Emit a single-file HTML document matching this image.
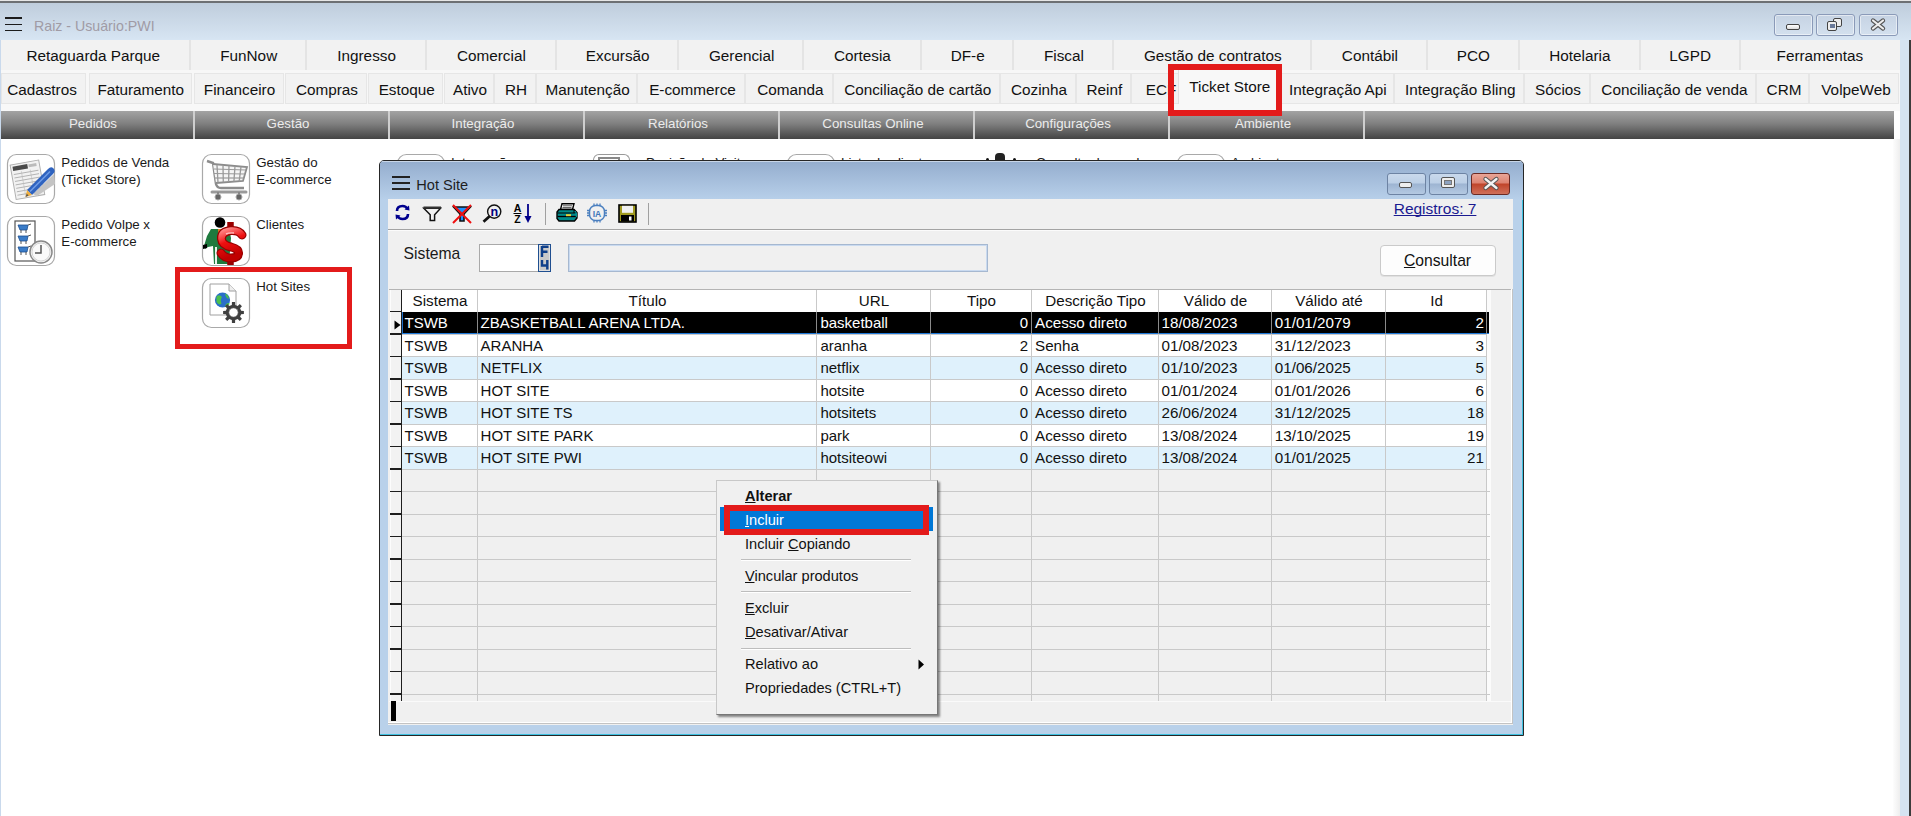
<!DOCTYPE html><html><head><meta charset="utf-8"><title>Hot Site</title><style>
html,body{margin:0;padding:0;}body{width:1911px;height:816px;overflow:hidden;position:relative;background:#fff;font-family:"Liberation Sans",sans-serif;}
div{box-sizing:border-box;}
u{text-decoration:underline;text-underline-offset:1px;text-decoration-skip-ink:none;}
</style></head><body>
<div style="position:absolute;left:0px;top:0px;width:1911px;height:1px;background:#e6e6e6"></div>
<div style="position:absolute;left:0px;top:1px;width:1911px;height:2px;background:#6d7073"></div>
<div style="position:absolute;left:0px;top:3px;width:1911px;height:37px;background:linear-gradient(#bfcddc,#d7e5f3)"></div>
<div style="position:absolute;left:0px;top:40px;width:1px;height:776px;background:#c9d9ec"></div>
<div style="position:absolute;left:1900px;top:40px;width:9px;height:776px;background:#d5e3f1"></div>
<div style="position:absolute;left:1909px;top:40px;width:2px;height:776px;background:#3c3c3c"></div>
<div style="position:absolute;left:5px;top:17.3px;width:17px;height:1.7px;background:#1c1c1c"></div>
<div style="position:absolute;left:5px;top:23.6px;width:17px;height:1.7px;background:#1c1c1c"></div>
<div style="position:absolute;left:5px;top:29.6px;width:17px;height:1.7px;background:#1c1c1c"></div>
<div style="position:absolute;left:34.00px;top:11.08px;width:1000px;height:30px;line-height:30px;font-size:14.2px;color:#a09ba5;text-align:left;font-weight:normal;white-space:nowrap;">Raiz - Usuário:PWI</div>
<div style="position:absolute;left:1774px;top:14px;width:39px;height:22px;border:1px solid #8a9ab8;border-radius:3px;background:linear-gradient(#c6d3e3,#d3e0ee);box-shadow:inset 0 0 0 1px rgba(255,255,255,.5)"></div>
<div style="position:absolute;left:1786px;top:24px;width:14px;height:6px;background:linear-gradient(#fff,#ddd);border:1px solid #444;border-radius:2px"></div>
<div style="position:absolute;left:1816px;top:14px;width:39px;height:22px;border:1px solid #8a9ab8;border-radius:3px;background:linear-gradient(#c6d3e3,#d3e0ee);box-shadow:inset 0 0 0 1px rgba(255,255,255,.5)"></div>
<div style="position:absolute;left:1832.5px;top:18px;width:9.5px;height:9px;background:#eee;border:1px solid #444;border-radius:2px"></div>
<div style="position:absolute;left:1827px;top:21px;width:10px;height:10px;background:#eee;border:1px solid #444;border-radius:2px"></div>
<div style="position:absolute;left:1829.5px;top:24px;width:5px;height:4px;background:#6a7a99"></div>
<div style="position:absolute;left:1859px;top:14px;width:39px;height:22px;border:1px solid #8a9ab8;border-radius:3px;background:linear-gradient(#c6d3e3,#d3e0ee);box-shadow:inset 0 0 0 1px rgba(255,255,255,.5)"></div>
<svg style="position:absolute;left:1868px;top:16px" width="20" height="17" viewBox="0 0 20 17"><path d="M5 4.5 L15 12.5 M15 4.5 L5 12.5" stroke="#555" stroke-width="4.4" stroke-linecap="round"/><path d="M5 4.5 L15 12.5 M15 4.5 L5 12.5" stroke="#eee" stroke-width="2.2" stroke-linecap="round"/></svg>
<div style="position:absolute;left:1px;top:40px;width:1899px;height:30px;background:#f2f2f2"></div>
<div style="position:absolute;left:189px;top:40px;width:2px;height:30px;background:#e4e4e4"></div>
<div style="position:absolute;left:305px;top:40px;width:2px;height:30px;background:#e4e4e4"></div>
<div style="position:absolute;left:425px;top:40px;width:2px;height:30px;background:#e4e4e4"></div>
<div style="position:absolute;left:555px;top:40px;width:2px;height:30px;background:#e4e4e4"></div>
<div style="position:absolute;left:677px;top:40px;width:2px;height:30px;background:#e4e4e4"></div>
<div style="position:absolute;left:802px;top:40px;width:2px;height:30px;background:#e4e4e4"></div>
<div style="position:absolute;left:920px;top:40px;width:2px;height:30px;background:#e4e4e4"></div>
<div style="position:absolute;left:1012px;top:40px;width:2px;height:30px;background:#e4e4e4"></div>
<div style="position:absolute;left:1112px;top:40px;width:2px;height:30px;background:#e4e4e4"></div>
<div style="position:absolute;left:1310px;top:40px;width:2px;height:30px;background:#e4e4e4"></div>
<div style="position:absolute;left:1426px;top:40px;width:2px;height:30px;background:#e4e4e4"></div>
<div style="position:absolute;left:1518px;top:40px;width:2px;height:30px;background:#e4e4e4"></div>
<div style="position:absolute;left:1639px;top:40px;width:2px;height:30px;background:#e4e4e4"></div>
<div style="position:absolute;left:1739px;top:40px;width:2px;height:30px;background:#e4e4e4"></div>
<div style="position:absolute;left:1px;top:70px;width:1899px;height:3px;background:#f7f7f7"></div>
<div style="position:absolute;left:-406.70px;top:40.70px;width:1000px;height:30px;line-height:30px;font-size:15.3px;color:#111;text-align:center;font-weight:normal;white-space:nowrap;">Retaguarda Parque</div>
<div style="position:absolute;left:-251.30px;top:40.70px;width:1000px;height:30px;line-height:30px;font-size:15.3px;color:#111;text-align:center;font-weight:normal;white-space:nowrap;">FunNow</div>
<div style="position:absolute;left:-133.40px;top:40.70px;width:1000px;height:30px;line-height:30px;font-size:15.3px;color:#111;text-align:center;font-weight:normal;white-space:nowrap;">Ingresso</div>
<div style="position:absolute;left:-8.60px;top:40.70px;width:1000px;height:30px;line-height:30px;font-size:15.3px;color:#111;text-align:center;font-weight:normal;white-space:nowrap;">Comercial</div>
<div style="position:absolute;left:117.70px;top:40.70px;width:1000px;height:30px;line-height:30px;font-size:15.3px;color:#111;text-align:center;font-weight:normal;white-space:nowrap;">Excursão</div>
<div style="position:absolute;left:241.70px;top:40.70px;width:1000px;height:30px;line-height:30px;font-size:15.3px;color:#111;text-align:center;font-weight:normal;white-space:nowrap;">Gerencial</div>
<div style="position:absolute;left:362.40px;top:40.70px;width:1000px;height:30px;line-height:30px;font-size:15.3px;color:#111;text-align:center;font-weight:normal;white-space:nowrap;">Cortesia</div>
<div style="position:absolute;left:467.70px;top:40.70px;width:1000px;height:30px;line-height:30px;font-size:15.3px;color:#111;text-align:center;font-weight:normal;white-space:nowrap;">DF-e</div>
<div style="position:absolute;left:563.90px;top:40.70px;width:1000px;height:30px;line-height:30px;font-size:15.3px;color:#111;text-align:center;font-weight:normal;white-space:nowrap;">Fiscal</div>
<div style="position:absolute;left:712.80px;top:40.70px;width:1000px;height:30px;line-height:30px;font-size:15.3px;color:#111;text-align:center;font-weight:normal;white-space:nowrap;">Gestão de contratos</div>
<div style="position:absolute;left:869.90px;top:40.70px;width:1000px;height:30px;line-height:30px;font-size:15.3px;color:#111;text-align:center;font-weight:normal;white-space:nowrap;">Contábil</div>
<div style="position:absolute;left:973.30px;top:40.70px;width:1000px;height:30px;line-height:30px;font-size:15.3px;color:#111;text-align:center;font-weight:normal;white-space:nowrap;">PCO</div>
<div style="position:absolute;left:1079.80px;top:40.70px;width:1000px;height:30px;line-height:30px;font-size:15.3px;color:#111;text-align:center;font-weight:normal;white-space:nowrap;">Hotelaria</div>
<div style="position:absolute;left:1190.20px;top:40.70px;width:1000px;height:30px;line-height:30px;font-size:15.3px;color:#111;text-align:center;font-weight:normal;white-space:nowrap;">LGPD</div>
<div style="position:absolute;left:1319.90px;top:40.70px;width:1000px;height:30px;line-height:30px;font-size:15.3px;color:#111;text-align:center;font-weight:normal;white-space:nowrap;">Ferramentas</div>
<div style="position:absolute;left:1px;top:73px;width:1899px;height:31px;background:#f7f7f7"></div>
<div style="position:absolute;left:1px;top:73px;width:85px;height:31px;background:#f2f2f2;border:1px solid #e6e6e6"></div>
<div style="position:absolute;left:89px;top:73px;width:103px;height:31px;background:#f2f2f2;border:1px solid #e6e6e6"></div>
<div style="position:absolute;left:194px;top:73px;width:90px;height:31px;background:#f2f2f2;border:1px solid #e6e6e6"></div>
<div style="position:absolute;left:285px;top:73px;width:82px;height:31px;background:#f2f2f2;border:1px solid #e6e6e6"></div>
<div style="position:absolute;left:368px;top:73px;width:75px;height:31px;background:#f2f2f2;border:1px solid #e6e6e6"></div>
<div style="position:absolute;left:444px;top:73px;width:50px;height:31px;background:#f2f2f2;border:1px solid #e6e6e6"></div>
<div style="position:absolute;left:494px;top:73px;width:42px;height:31px;background:#f2f2f2;border:1px solid #e6e6e6"></div>
<div style="position:absolute;left:536px;top:73px;width:101px;height:31px;background:#f2f2f2;border:1px solid #e6e6e6"></div>
<div style="position:absolute;left:637px;top:73px;width:108px;height:31px;background:#f2f2f2;border:1px solid #e6e6e6"></div>
<div style="position:absolute;left:745px;top:73px;width:88px;height:31px;background:#f2f2f2;border:1px solid #e6e6e6"></div>
<div style="position:absolute;left:833px;top:73px;width:167px;height:31px;background:#f2f2f2;border:1px solid #e6e6e6"></div>
<div style="position:absolute;left:1000px;top:73px;width:76px;height:31px;background:#f2f2f2;border:1px solid #e6e6e6"></div>
<div style="position:absolute;left:1076px;top:73px;width:55px;height:31px;background:#f2f2f2;border:1px solid #e6e6e6"></div>
<div style="position:absolute;left:1131px;top:73px;width:48px;height:31px;background:#f2f2f2;border:1px solid #e6e6e6"></div>
<div style="position:absolute;left:1179px;top:73px;width:97px;height:31px;background:#f2f2f2;border:1px solid #e6e6e6"></div>
<div style="position:absolute;left:1276px;top:73px;width:118px;height:31px;background:#f2f2f2;border:1px solid #e6e6e6"></div>
<div style="position:absolute;left:1394px;top:73px;width:130px;height:31px;background:#f2f2f2;border:1px solid #e6e6e6"></div>
<div style="position:absolute;left:1524px;top:73px;width:66px;height:31px;background:#f2f2f2;border:1px solid #e6e6e6"></div>
<div style="position:absolute;left:1590px;top:73px;width:166px;height:31px;background:#f2f2f2;border:1px solid #e6e6e6"></div>
<div style="position:absolute;left:1756px;top:73px;width:53px;height:31px;background:#f2f2f2;border:1px solid #e6e6e6"></div>
<div style="position:absolute;left:1809px;top:73px;width:90px;height:31px;background:#f2f2f2;border:1px solid #e6e6e6"></div>
<div style="position:absolute;left:-458.00px;top:74.70px;width:1000px;height:30px;line-height:30px;font-size:15.3px;color:#111;text-align:center;font-weight:normal;white-space:nowrap;">Cadastros</div>
<div style="position:absolute;left:-359.25px;top:74.70px;width:1000px;height:30px;line-height:30px;font-size:15.3px;color:#111;text-align:center;font-weight:normal;white-space:nowrap;">Faturamento</div>
<div style="position:absolute;left:-260.50px;top:74.70px;width:1000px;height:30px;line-height:30px;font-size:15.3px;color:#111;text-align:center;font-weight:normal;white-space:nowrap;">Financeiro</div>
<div style="position:absolute;left:-173.00px;top:74.70px;width:1000px;height:30px;line-height:30px;font-size:15.3px;color:#111;text-align:center;font-weight:normal;white-space:nowrap;">Compras</div>
<div style="position:absolute;left:-93.30px;top:74.70px;width:1000px;height:30px;line-height:30px;font-size:15.3px;color:#111;text-align:center;font-weight:normal;white-space:nowrap;">Estoque</div>
<div style="position:absolute;left:-30.00px;top:74.70px;width:1000px;height:30px;line-height:30px;font-size:15.3px;color:#111;text-align:center;font-weight:normal;white-space:nowrap;">Ativo</div>
<div style="position:absolute;left:16.00px;top:74.70px;width:1000px;height:30px;line-height:30px;font-size:15.3px;color:#111;text-align:center;font-weight:normal;white-space:nowrap;">RH</div>
<div style="position:absolute;left:87.60px;top:74.70px;width:1000px;height:30px;line-height:30px;font-size:15.3px;color:#111;text-align:center;font-weight:normal;white-space:nowrap;">Manutenção</div>
<div style="position:absolute;left:192.50px;top:74.70px;width:1000px;height:30px;line-height:30px;font-size:15.3px;color:#111;text-align:center;font-weight:normal;white-space:nowrap;">E-commerce</div>
<div style="position:absolute;left:290.40px;top:74.70px;width:1000px;height:30px;line-height:30px;font-size:15.3px;color:#111;text-align:center;font-weight:normal;white-space:nowrap;">Comanda</div>
<div style="position:absolute;left:417.70px;top:74.70px;width:1000px;height:30px;line-height:30px;font-size:15.3px;color:#111;text-align:center;font-weight:normal;white-space:nowrap;">Conciliação de cartão</div>
<div style="position:absolute;left:539.00px;top:74.70px;width:1000px;height:30px;line-height:30px;font-size:15.3px;color:#111;text-align:center;font-weight:normal;white-space:nowrap;">Cozinha</div>
<div style="position:absolute;left:604.40px;top:74.70px;width:1000px;height:30px;line-height:30px;font-size:15.3px;color:#111;text-align:center;font-weight:normal;white-space:nowrap;">Reinf</div>
<div style="position:absolute;left:661.00px;top:74.70px;width:1000px;height:30px;line-height:30px;font-size:15.3px;color:#111;text-align:center;font-weight:normal;white-space:nowrap;">ECF</div>
<div style="position:absolute;left:837.80px;top:74.70px;width:1000px;height:30px;line-height:30px;font-size:15.3px;color:#111;text-align:center;font-weight:normal;white-space:nowrap;">Integração Api</div>
<div style="position:absolute;left:960.20px;top:74.70px;width:1000px;height:30px;line-height:30px;font-size:15.3px;color:#111;text-align:center;font-weight:normal;white-space:nowrap;">Integração Bling</div>
<div style="position:absolute;left:1058.00px;top:74.70px;width:1000px;height:30px;line-height:30px;font-size:15.3px;color:#111;text-align:center;font-weight:normal;white-space:nowrap;">Sócios</div>
<div style="position:absolute;left:1174.50px;top:74.70px;width:1000px;height:30px;line-height:30px;font-size:15.3px;color:#111;text-align:center;font-weight:normal;white-space:nowrap;">Conciliação de venda</div>
<div style="position:absolute;left:1284.00px;top:74.70px;width:1000px;height:30px;line-height:30px;font-size:15.3px;color:#111;text-align:center;font-weight:normal;white-space:nowrap;">CRM</div>
<div style="position:absolute;left:1356.00px;top:74.70px;width:1000px;height:30px;line-height:30px;font-size:15.3px;color:#111;text-align:center;font-weight:normal;white-space:nowrap;">VolpeWeb</div>
<div style="position:absolute;left:1178px;top:70px;width:100px;height:39px;background:#f8f8f8;border-left:1px solid #e0e0e0"></div>
<div style="position:absolute;left:729.80px;top:71.70px;width:1000px;height:30px;line-height:30px;font-size:15.3px;color:#111;text-align:center;font-weight:normal;white-space:nowrap;">Ticket Store</div>
<div style="position:absolute;left:104px;top:104px;width:0px;height:0px;"></div>
<div style="position:absolute;left:1px;top:104px;width:1899px;height:7px;background:#f8f8f8"></div>
<div style="position:absolute;left:1px;top:111px;width:1893px;height:28px;background:linear-gradient(#a3a3a3,#808080 45%,#444)"></div>
<div style="position:absolute;left:193px;top:111px;width:2px;height:28px;background:#cfcfcf"></div>
<div style="position:absolute;left:388px;top:111px;width:2px;height:28px;background:#cfcfcf"></div>
<div style="position:absolute;left:583px;top:111px;width:2px;height:28px;background:#cfcfcf"></div>
<div style="position:absolute;left:778px;top:111px;width:2px;height:28px;background:#cfcfcf"></div>
<div style="position:absolute;left:973px;top:111px;width:2px;height:28px;background:#cfcfcf"></div>
<div style="position:absolute;left:1168px;top:111px;width:2px;height:28px;background:#cfcfcf"></div>
<div style="position:absolute;left:1363px;top:111px;width:2px;height:28px;background:#cfcfcf"></div>
<div style="position:absolute;left:-407.00px;top:109.09px;width:1000px;height:30px;line-height:30px;font-size:13.3px;color:#ececec;text-align:center;font-weight:normal;white-space:nowrap;">Pedidos</div>
<div style="position:absolute;left:-212.00px;top:109.09px;width:1000px;height:30px;line-height:30px;font-size:13.3px;color:#ececec;text-align:center;font-weight:normal;white-space:nowrap;">Gestão</div>
<div style="position:absolute;left:-17.00px;top:109.09px;width:1000px;height:30px;line-height:30px;font-size:13.3px;color:#ececec;text-align:center;font-weight:normal;white-space:nowrap;">Integração</div>
<div style="position:absolute;left:178.00px;top:109.09px;width:1000px;height:30px;line-height:30px;font-size:13.3px;color:#ececec;text-align:center;font-weight:normal;white-space:nowrap;">Relatórios</div>
<div style="position:absolute;left:373.00px;top:109.09px;width:1000px;height:30px;line-height:30px;font-size:13.3px;color:#ececec;text-align:center;font-weight:normal;white-space:nowrap;">Consultas Online</div>
<div style="position:absolute;left:568.00px;top:109.09px;width:1000px;height:30px;line-height:30px;font-size:13.3px;color:#ececec;text-align:center;font-weight:normal;white-space:nowrap;">Configurações</div>
<div style="position:absolute;left:763.00px;top:109.09px;width:1000px;height:30px;line-height:30px;font-size:13.3px;color:#ececec;text-align:center;font-weight:normal;white-space:nowrap;">Ambiente</div>
<div style="position:absolute;left:1893px;top:139px;width:7px;height:677px;background:linear-gradient(90deg,#fdfdfd,#eeeeee)"></div>
<svg style="position:absolute;left:6px;top:153px" width="51" height="53" viewBox="-1 -1 51 53"><rect x="0.5" y="0.5" width="47" height="49" rx="9" ry="9" fill="#fff" stroke="#a9a9a9" stroke-width="1.2"/><g transform="rotate(-10 22 26)"><rect x="6" y="8" width="29" height="35" fill="#f2f2f2" stroke="#b0b0b0" stroke-width="1"/><rect x="8" y="10" width="15" height="4.5" fill="#4a4a4a"/><rect x="24" y="10.5" width="8" height="3" fill="#bbb"/><line x1="8" y1="18.0" x2="33" y2="18.0" stroke="#a8a8a8" stroke-width="0.8"/><line x1="8" y1="21.5" x2="33" y2="21.5" stroke="#a8a8a8" stroke-width="0.8"/><line x1="8" y1="25.0" x2="33" y2="25.0" stroke="#a8a8a8" stroke-width="0.8"/><line x1="8" y1="28.5" x2="33" y2="28.5" stroke="#a8a8a8" stroke-width="0.8"/><line x1="8" y1="32.0" x2="33" y2="32.0" stroke="#a8a8a8" stroke-width="0.8"/><line x1="8" y1="35.5" x2="33" y2="35.5" stroke="#a8a8a8" stroke-width="0.8"/><line x1="8" y1="39.0" x2="33" y2="39.0" stroke="#a8a8a8" stroke-width="0.8"/><line x1="16" y1="16" x2="16" y2="41" stroke="#bbb" stroke-width="0.6"/><line x1="25" y1="16" x2="25" y2="41" stroke="#bbb" stroke-width="0.6"/></g><path d="M47 20 L48 30 L30 42 L26 40 Z" fill="#c4c4c4"/><path d="M20 36 L41 15 Q44 12 46.5 14.5 Q49 17 46 20 L25 41 Z" fill="#2f63bf"/><path d="M23 37.5 L43 17.5" stroke="#6f9ce6" stroke-width="1.6"/><path d="M20 36 L25 41 L18.5 43 Z" fill="#f0b040"/><path d="M18.5 43 L19.8 39.8 L21.6 41.6 Z" fill="#555"/></svg>
<div style="position:absolute;left:61.30px;top:147.89px;width:1000px;height:30px;line-height:30px;font-size:13.3px;color:#1a1a1a;text-align:left;font-weight:normal;white-space:nowrap;">Pedidos de Venda</div>
<div style="position:absolute;left:61.30px;top:165.49px;width:1000px;height:30px;line-height:30px;font-size:13.3px;color:#1a1a1a;text-align:left;font-weight:normal;white-space:nowrap;">(Ticket Store)</div>
<svg style="position:absolute;left:6px;top:215px" width="51" height="53" viewBox="-1 -1 51 53"><rect x="0.5" y="0.5" width="47" height="49" rx="9" ry="9" fill="#fff" stroke="#a9a9a9" stroke-width="1.2"/><rect x="8" y="5" width="20" height="40" fill="#fff" stroke="#555" stroke-width="1.2"/><g transform="translate(11 8)"><path d="M0 1 L10 1 L9 6 L2 6 Z" fill="#3a7cc8" stroke="#1d4f90" stroke-width="0.8"/><line x1="3" y1="6" x2="3" y2="9" stroke="#555"/><line x1="8" y1="6" x2="8" y2="9" stroke="#555"/><path d="M10 1 L13 0" stroke="#555"/></g><g transform="translate(11 19)"><path d="M0 1 L10 1 L9 6 L2 6 Z" fill="#3a7cc8" stroke="#1d4f90" stroke-width="0.8"/><line x1="3" y1="6" x2="3" y2="9" stroke="#555"/><line x1="8" y1="6" x2="8" y2="9" stroke="#555"/><path d="M10 1 L13 0" stroke="#555"/></g><g transform="translate(11 30)"><path d="M0 1 L10 1 L9 6 L2 6 Z" fill="#3a7cc8" stroke="#1d4f90" stroke-width="0.8"/><line x1="3" y1="6" x2="3" y2="9" stroke="#555"/><line x1="8" y1="6" x2="8" y2="9" stroke="#555"/><path d="M10 1 L13 0" stroke="#555"/></g><circle cx="34" cy="36" r="11" fill="#f2f2f2" stroke="#888" stroke-width="1.5"/><circle cx="34" cy="36" r="9" fill="#fafafa" stroke="#ccc" stroke-width="0.8"/><path d="M34 29 L34 37 L28 37" stroke="#555" stroke-width="1.5" fill="none"/></svg>
<div style="position:absolute;left:61.30px;top:209.89px;width:1000px;height:30px;line-height:30px;font-size:13.3px;color:#1a1a1a;text-align:left;font-weight:normal;white-space:nowrap;">Pedido Volpe x</div>
<div style="position:absolute;left:61.30px;top:227.49px;width:1000px;height:30px;line-height:30px;font-size:13.3px;color:#1a1a1a;text-align:left;font-weight:normal;white-space:nowrap;">E-commerce</div>
<svg style="position:absolute;left:201px;top:153px" width="51" height="53" viewBox="-1 -1 51 53"><rect x="0.5" y="0.5" width="47" height="49" rx="9" ry="9" fill="#fff" stroke="#a9a9a9" stroke-width="1.2"/><path d="M5 7 L11 9 L14 30 Q15 34 19 34 L42 34" stroke="#8c8c8c" stroke-width="2.4" fill="none"/><path d="M11 10 L45 13 L41 27 L14 29" stroke="#8c8c8c" stroke-width="1.8" fill="#f5f5f5"/><line x1="15" y1="11.0" x2="16.0" y2="28.5" stroke="#999" stroke-width="1.3"/><line x1="21" y1="11.4" x2="21.3" y2="28.2" stroke="#999" stroke-width="1.3"/><line x1="27" y1="11.8" x2="26.6" y2="27.9" stroke="#999" stroke-width="1.3"/><line x1="33" y1="12.2" x2="31.9" y2="27.6" stroke="#999" stroke-width="1.3"/><line x1="39" y1="12.6" x2="37.2" y2="27.3" stroke="#999" stroke-width="1.3"/><line x1="12" y1="15.0" x2="44.0" y2="16" stroke="#999" stroke-width="1.2"/><line x1="12" y1="19.5" x2="42.8" y2="20" stroke="#999" stroke-width="1.2"/><line x1="12" y1="24.0" x2="41.6" y2="24" stroke="#999" stroke-width="1.2"/><path d="M10 38 L44 38" stroke="#9a9a9a" stroke-width="3" stroke-linecap="round"/><circle cx="16" cy="43" r="3" fill="#666" stroke="#aaa"/><circle cx="37" cy="43" r="3" fill="#666" stroke="#aaa"/><line x1="16" y1="38" x2="16" y2="41" stroke="#888" stroke-width="2"/><line x1="37" y1="38" x2="37" y2="41" stroke="#888" stroke-width="2"/></svg>
<div style="position:absolute;left:256.20px;top:147.89px;width:1000px;height:30px;line-height:30px;font-size:13.3px;color:#1a1a1a;text-align:left;font-weight:normal;white-space:nowrap;">Gestão do</div>
<div style="position:absolute;left:256.20px;top:165.49px;width:1000px;height:30px;line-height:30px;font-size:13.3px;color:#1a1a1a;text-align:left;font-weight:normal;white-space:nowrap;">E-commerce</div>
<svg style="position:absolute;left:201px;top:215px" width="51" height="53" viewBox="-1 -1 51 53"><rect x="0.5" y="0.5" width="47" height="49" rx="9" ry="9" fill="#fff" stroke="#a9a9a9" stroke-width="1.2"/><defs><linearGradient id="rg" x1="0" y1="0" x2="0.3" y2="1"><stop offset="0" stop-color="#ff8a8a"/><stop offset="0.45" stop-color="#ee1010"/><stop offset="1" stop-color="#c00000"/></linearGradient></defs><circle cx="18" cy="6.5" r="5.3" fill="#000"/><path d="M9 13 L27 13 L29 22 L27 48 L12 48 L11 30 L6 31 L3 33 L2 30 L5 20 Z" fill="#1f7a3e"/><path d="M13 31 L13 48 L15 48 L15 31 Z" fill="#fff" opacity="0.9"/><path d="M16 13 L20 13 L19 29 L17 29 Z" fill="#f07a20"/><path d="M1 29 L5 28 L5 32 L1 33 Z" fill="#000"/><path d="M28.5 6 L28.5 17 M28.5 39 L28.5 49" stroke="#9a0000" stroke-width="6.5"/><path d="M28.5 7 L28.5 17 M28.5 39 L28.5 48.5" stroke="url(#rg)" stroke-width="4.2"/><path d="M40 19 Q37 14 29 14.5 Q19 15.5 19.5 23 Q20 29 29 31 Q37 33 36.5 37.5 Q36 42 29 42 Q22 42 19 37" stroke="#9a0000" stroke-width="9" fill="none" stroke-linecap="round"/><path d="M40 19 Q37 14 29 14.5 Q19 15.5 19.5 23 Q20 29 29 31 Q37 33 36.5 37.5 Q36 42 29 42 Q22 42 19 37" stroke="url(#rg)" stroke-width="6.5" fill="none" stroke-linecap="round"/><path d="M24 18 Q27 16.5 32 17" stroke="#ffc0c0" stroke-width="1.5" fill="none"/></svg>
<div style="position:absolute;left:256.20px;top:209.89px;width:1000px;height:30px;line-height:30px;font-size:13.3px;color:#1a1a1a;text-align:left;font-weight:normal;white-space:nowrap;">Clientes</div>
<svg style="position:absolute;left:201px;top:277px" width="51" height="53" viewBox="-1 -1 51 53"><rect x="0.5" y="0.5" width="47" height="49" rx="9" ry="9" fill="#fff" stroke="#a9a9a9" stroke-width="1.2"/><path d="M8 6 L27 6 L34 13 L34 37 L8 37 Z" fill="#fff" stroke="#a0a0a0" stroke-width="1"/><path d="M27 6 L27 13 L34 13" fill="#eee" stroke="#a0a0a0" stroke-width="1"/><circle cx="20.5" cy="22" r="7.6" fill="#2a6fc9"/><path d="M14.5 18.5 Q17.5 16 20 19 Q18 22 19.5 25.5 Q17 28 14.5 24 Z" fill="#4cc04c"/><path d="M23 15.5 Q27.5 17.5 26.5 21 Q24 20 23 15.5 Z" fill="#4cc04c"/><path d="M24 26 Q27 24 27.5 26 Q26 29 23 28.5 Z" fill="#4cc04c"/><path d="M39.12 32.83 L41.88 32.94 L41.88 36.06 L39.12 36.17 L38.07 38.71 L39.95 40.74 L37.74 42.95 L35.71 41.07 L33.17 42.12 L33.06 44.88 L29.94 44.88 L29.83 42.12 L27.29 41.07 L25.26 42.95 L23.05 40.74 L24.93 38.71 L23.88 36.17 L21.12 36.06 L21.12 32.94 L23.88 32.83 L24.93 30.29 L23.05 28.26 L25.26 26.05 L27.29 27.93 L29.83 26.88 L29.94 24.12 L33.06 24.12 L33.17 26.88 L35.71 27.93 L37.74 26.05 L39.95 28.26 L38.07 30.29 Z" fill="#3f3f3f"/><circle cx="31.5" cy="34.5" r="4.6" fill="#fff"/><circle cx="31.5" cy="34.5" r="4.6" fill="none" stroke="#666" stroke-width="0.6"/></svg>
<div style="position:absolute;left:256.20px;top:271.89px;width:1000px;height:30px;line-height:30px;font-size:13.3px;color:#1a1a1a;text-align:left;font-weight:normal;white-space:nowrap;">Hot Sites</div>
<svg style="position:absolute;left:396px;top:153px" width="51" height="53" viewBox="-1 -1 51 53"><rect x="0.5" y="0.5" width="47" height="49" rx="9" ry="9" fill="#fff" stroke="#a9a9a9" stroke-width="1.2"/></svg>
<div style="position:absolute;left:451.00px;top:147.89px;width:1000px;height:30px;line-height:30px;font-size:13.3px;color:#1a1a1a;text-align:left;font-weight:normal;white-space:nowrap;">Integração</div>
<div style="position:absolute;left:593px;top:154px;width:37px;height:8px;border:1px solid #999;border-bottom:none;border-radius:6px 6px 0 0"></div>
<div style="position:absolute;left:598px;top:157px;width:22px;height:5px;border:2px solid #888;border-bottom:none"></div>
<div style="position:absolute;left:646.00px;top:147.89px;width:1000px;height:30px;line-height:30px;font-size:13.3px;color:#1a1a1a;text-align:left;font-weight:normal;white-space:nowrap;">Posição de Visitas</div>
<svg style="position:absolute;left:786px;top:153px" width="51" height="53" viewBox="-1 -1 51 53"><rect x="0.5" y="0.5" width="47" height="49" rx="9" ry="9" fill="#fff" stroke="#a9a9a9" stroke-width="1.2"/></svg>
<div style="position:absolute;left:841.00px;top:147.89px;width:1000px;height:30px;line-height:30px;font-size:13.3px;color:#1a1a1a;text-align:left;font-weight:normal;white-space:nowrap;">Lista de clientes</div>
<div style="position:absolute;left:986px;top:158px;width:3px;height:3px;background:#111;border-radius:50%"></div>
<div style="position:absolute;left:1013px;top:158px;width:3px;height:3px;background:#111;border-radius:50%"></div>
<div style="position:absolute;left:995px;top:153px;width:10px;height:7px;background:#222;border-radius:4px 4px 0 0"></div>
<div style="position:absolute;left:1036.00px;top:147.89px;width:1000px;height:30px;line-height:30px;font-size:13.3px;color:#1a1a1a;text-align:left;font-weight:normal;white-space:nowrap;">Consulta de vendas</div>
<svg style="position:absolute;left:1176px;top:153px" width="51" height="53" viewBox="-1 -1 51 53"><rect x="0.5" y="0.5" width="47" height="49" rx="9" ry="9" fill="#fff" stroke="#a9a9a9" stroke-width="1.2"/><rect x="14" y="6" width="22" height="6" fill="#5a8ad0"/></svg>
<div style="position:absolute;left:1231.00px;top:147.89px;width:1000px;height:30px;line-height:30px;font-size:13.3px;color:#1a1a1a;text-align:left;font-weight:normal;white-space:nowrap;">Ambiente</div>
<div style="position:absolute;left:175px;top:267px;width:177px;height:82px;border:5px solid #e31b1b"></div>
<div style="position:absolute;left:379px;top:160px;width:1145px;height:576px;border:1px solid #262626;border-radius:5px 5px 0 0;background:#b9d1ea;overflow:hidden"><div style="position:absolute;left:0;top:0;width:100%;height:39px;background:linear-gradient(#94adce,#b8d0ea)"></div><div style="position:absolute;left:0;top:0;width:100%;height:1px;background:#c8d6e8"></div></div>
<div style="position:absolute;left:1522px;top:200px;width:1px;height:535px;background:#3ec1e0"></div>
<div style="position:absolute;left:380px;top:734px;width:1142px;height:1px;background:#3ec1e0"></div>
<div style="position:absolute;left:388px;top:199px;width:1125px;height:526px;background:#f0f0f0"></div>
<div style="position:absolute;left:392px;top:175.5px;width:18px;height:2px;background:#222"></div>
<div style="position:absolute;left:392px;top:182px;width:18px;height:2px;background:#222"></div>
<div style="position:absolute;left:392px;top:188px;width:18px;height:2px;background:#222"></div>
<div style="position:absolute;left:416.30px;top:169.64px;width:1000px;height:30px;line-height:30px;font-size:14.6px;color:#1e1e1e;text-align:left;font-weight:normal;white-space:nowrap;">Hot Site</div>
<div style="position:absolute;left:1387px;top:173px;width:39px;height:22px;border:1px solid #6d83a3;border-radius:3px;background:linear-gradient(#c9d9ec 0%,#bccfe6 45%,#9db4d2 50%,#b4c9e2 100%)"></div>
<div style="position:absolute;left:1399px;top:182px;width:13px;height:6px;background:#eee;border:1px solid #555;border-radius:2px"></div>
<div style="position:absolute;left:1429px;top:173px;width:39px;height:22px;border:1px solid #6d83a3;border-radius:3px;background:linear-gradient(#c9d9ec 0%,#bccfe6 45%,#9db4d2 50%,#b4c9e2 100%)"></div>
<div style="position:absolute;left:1441px;top:177px;width:14px;height:11px;background:#eee;border:1px solid #555;border-radius:2px"></div>
<div style="position:absolute;left:1444px;top:180px;width:8px;height:5px;background:#8da2c0;border:1px solid #777"></div>
<div style="position:absolute;left:1471px;top:173px;width:39px;height:22px;border:1px solid #6b2a24;border-radius:3px;background:linear-gradient(#e9a597 0%,#dd8472 45%,#c0442a 50%,#d0705a 100%)"></div>
<svg style="position:absolute;left:1481px;top:175px" width="20" height="17" viewBox="0 0 20 17"><path d="M4.5 4 L15.5 13 M15.5 4 L4.5 13" stroke="#555" stroke-width="4.3" stroke-linecap="round"/><path d="M4.5 4 L15.5 13 M15.5 4 L4.5 13" stroke="#f4f4f4" stroke-width="2.3" stroke-linecap="round"/></svg>
<div style="position:absolute;left:388px;top:229px;width:1125px;height:1px;background:#a3a3a3"></div>
<div style="position:absolute;left:388px;top:230px;width:1125px;height:1px;background:#fbfbfb"></div>
<div style="position:absolute;left:1393.70px;top:193.53px;width:1000px;height:30px;line-height:30px;font-size:15.5px;color:#1a1a90;text-align:left;font-weight:normal;white-space:nowrap;"><u>Registros: 7</u></div>
<svg style="position:absolute;left:394px;top:203px" width="17" height="19" viewBox="0 0 17 19"><path d="M3 8 Q3 3 8.5 3 Q12 3 13.5 6" stroke="#00008e" stroke-width="2.6" fill="none"/><path d="M10.5 6.5 L15.5 7.5 L15 2.5 Z" fill="#00008e"/><path d="M14 11 Q14 16 8.5 16 Q5 16 3.5 13" stroke="#00008e" stroke-width="2.6" fill="none"/><path d="M6.5 12.5 L1.5 11.5 L2 16.5 Z" fill="#00008e"/></svg>
<svg style="position:absolute;left:422px;top:206px" width="20" height="17" viewBox="0 0 20 17"><path d="M1.8 2.2 L18.6 2.2 L12.6 8.8 L12.6 14.6 L8.2 14.6 L8.2 8.8 Z" fill="none" stroke="#111" stroke-width="1.5" stroke-linejoin="miter"/><path d="M1.5 1.6 L19 1.6" stroke="#333" stroke-width="2.2"/></svg>
<svg style="position:absolute;left:452px;top:204px" width="20" height="20" viewBox="0 0 20 20"><path d="M1.5 3 L18.5 3 L12 10 L12 17 L8 17 L8 10 Z" fill="#1e90ff" stroke="#111" stroke-width="1.6"/><path d="M1 1 L19 19 M19 1 L1 19" stroke="#f01010" stroke-width="2"/></svg>
<svg style="position:absolute;left:481px;top:204px" width="21" height="20" viewBox="0 0 21 20"><circle cx="13.2" cy="7.6" r="6.6" fill="none" stroke="#111" stroke-width="1.4"/><text x="13.3" y="11.6" font-family="Liberation Sans" font-weight="bold" font-size="12.5" fill="#000080" text-anchor="middle">n</text><path d="M8.6 12.2 L2.5 17.8" stroke="#111" stroke-width="2.8"/></svg>
<svg style="position:absolute;left:512px;top:203px" width="21" height="21" viewBox="0 0 21 21"><text x="5.5" y="9" font-family="Liberation Sans" font-weight="bold" font-size="10.5" fill="#000" text-anchor="middle">A</text><text x="5.5" y="19.5" font-family="Liberation Sans" font-weight="bold" font-size="10.5" fill="#000" text-anchor="middle">Z</text><line x1="1.5" y1="10.5" x2="9.5" y2="10.5" stroke="#000" stroke-width="1"/><path d="M16 1 L16 15" stroke="#00008a" stroke-width="1.8"/><path d="M12.5 13 L19.5 13 L16 20 Z" fill="#00008a"/></svg>
<div style="position:absolute;left:545px;top:203px;width:1px;height:22px;background:#a0a0a0"></div>
<svg style="position:absolute;left:556px;top:203px" width="22" height="19" viewBox="0 0 22 19"><path d="M6 0.8 L18 0.8 L16.5 6.5 L4.5 6.5 Z" fill="#fff" stroke="#000" stroke-width="1.4"/><path d="M7 2.8 L16 2.8 M6.5 4.6 L15.5 4.6" stroke="#444" stroke-width="0.9"/><path d="M3 6.5 L18 6.5 L21 9.5 L21 15 L18.5 18 L3 18 L1 15.5 L1 9 Z" fill="#008a8a" stroke="#000" stroke-width="1.4"/><path d="M18 6.5 L18 10 L1.5 10" stroke="#000" stroke-width="1" fill="none"/><path d="M18 10 L21 9.5" stroke="#000" stroke-width="1"/><path d="M1.5 13.5 L20.5 13.5" stroke="#000" stroke-width="1.3"/><rect x="10" y="11.2" width="5" height="2" fill="#e6d23a"/><path d="M19 8 L20.3 10 L20.3 14" stroke="#00c0c0" stroke-width="0.9" fill="none"/></svg>
<svg style="position:absolute;left:586px;top:203px" width="22" height="20" viewBox="0 0 22 20"><rect x="3.5" y="2.5" width="15" height="15" rx="6" ry="6" fill="none" stroke="#4a7fbf" stroke-width="1.5"/><text x="11" y="13.8" font-family="Liberation Sans" font-weight="bold" font-size="8.5" fill="#3f76b8" text-anchor="middle">IA</text><path d="M8 0.5 L8 2.5 M11 0.5 L11 2.5 M14 0.5 L14 2.5 M1 7.5 L3.5 7.5 M1 10 L3.5 10 M1 12.5 L3.5 12.5 M18.5 7.5 L21 7.5 M18.5 10 L21 10 M18.5 12.5 L21 12.5 M8 17.5 L8 19.5 M11 17.5 L11 19.5 M14 17.5 L14 19.5" stroke="#4a7fbf" stroke-width="1.3"/></svg>
<svg style="position:absolute;left:618px;top:204px" width="19" height="19" viewBox="0 0 19 19"><rect x="1" y="1" width="17" height="17" fill="#a09a20" stroke="#000" stroke-width="1.6"/><rect x="4" y="1.8" width="11" height="7" fill="#f0f0f0"/><rect x="3" y="11" width="13" height="6.5" fill="#000"/><rect x="11" y="12.5" width="2.5" height="4" fill="#fff"/></svg>
<div style="position:absolute;left:648px;top:203px;width:1px;height:22px;background:#a0a0a0"></div>
<div style="position:absolute;left:403.60px;top:238.76px;width:1000px;height:30px;line-height:30px;font-size:15.7px;color:#1a1a1a;text-align:left;font-weight:normal;white-space:nowrap;">Sistema</div>
<div style="position:absolute;left:479px;top:244px;width:60px;height:28px;background:#fff;border:1px solid #a9a9a9;border-right:none"></div>
<div style="position:absolute;left:538px;top:243.5px;width:13px;height:28.5px;background:#c9c9c9;border:1.6px solid #1f4f90;box-shadow:inset 0 0 0 1px #e0e0e0"></div>
<svg style="position:absolute;left:538px;top:243px" width="13" height="30" viewBox="0 0 13 30"><path d="M4 3.8 L10.5 3.8 M4 3 L4 14 M4 8.8 L9.5 8.8" stroke="#0f3f8a" stroke-width="2.4" fill="none"/><path d="M4 17 L4 22.5 L10.5 22.5 M9.3 17 L9.3 26.5" stroke="#0f3f8a" stroke-width="2.4" fill="none"/></svg>
<div style="position:absolute;left:568px;top:244px;width:420px;height:28px;background:#f0f0f0;border:1px solid #a6b8d0;box-shadow:inset 0 0 0 1px #c9daf0"></div>
<div style="position:absolute;left:1380px;top:245px;width:116px;height:31px;background:#fdfdfd;border:1px solid #cacaca;border-radius:4px;box-shadow:0 1px 0 #e0e0e0"></div>
<div style="position:absolute;left:937.50px;top:245.56px;width:1000px;height:30px;line-height:30px;font-size:15.7px;color:#111;text-align:center;font-weight:normal;white-space:nowrap;"><u>C</u>onsultar</div>
<div style="position:absolute;left:389px;top:289px;width:1124px;height:412px;background:#f0f0f0"></div>
<div style="position:absolute;left:389px;top:289px;width:1124px;height:1px;background:#b4b4b4"></div>
<div style="position:absolute;left:402px;top:290px;width:1085px;height:21.5px;background:#fff"></div>
<div style="position:absolute;left:1487px;top:290px;width:4px;height:411px;background:#fbfbfb"></div>
<div style="position:absolute;left:-60.00px;top:285.53px;width:1000px;height:30px;line-height:30px;font-size:15.2px;color:#111;text-align:center;font-weight:normal;white-space:nowrap;">Sistema</div>
<div style="position:absolute;left:147.50px;top:285.53px;width:1000px;height:30px;line-height:30px;font-size:15.2px;color:#111;text-align:center;font-weight:normal;white-space:nowrap;">Título</div>
<div style="position:absolute;left:374.00px;top:285.53px;width:1000px;height:30px;line-height:30px;font-size:15.2px;color:#111;text-align:center;font-weight:normal;white-space:nowrap;">URL</div>
<div style="position:absolute;left:481.50px;top:285.53px;width:1000px;height:30px;line-height:30px;font-size:15.2px;color:#111;text-align:center;font-weight:normal;white-space:nowrap;">Tipo</div>
<div style="position:absolute;left:595.50px;top:285.53px;width:1000px;height:30px;line-height:30px;font-size:15.2px;color:#111;text-align:center;font-weight:normal;white-space:nowrap;">Descrição Tipo</div>
<div style="position:absolute;left:715.50px;top:285.53px;width:1000px;height:30px;line-height:30px;font-size:15.2px;color:#111;text-align:center;font-weight:normal;white-space:nowrap;">Válido de</div>
<div style="position:absolute;left:829.00px;top:285.53px;width:1000px;height:30px;line-height:30px;font-size:15.2px;color:#111;text-align:center;font-weight:normal;white-space:nowrap;">Válido até</div>
<div style="position:absolute;left:936.50px;top:285.53px;width:1000px;height:30px;line-height:30px;font-size:15.2px;color:#111;text-align:center;font-weight:normal;white-space:nowrap;">Id</div>
<div style="position:absolute;left:402px;top:334.0px;width:1085px;height:22.5px;background:#ffffff"></div>
<div style="position:absolute;left:402px;top:356.5px;width:1085px;height:22.5px;background:#dff1fc"></div>
<div style="position:absolute;left:402px;top:379.0px;width:1085px;height:22.5px;background:#ffffff"></div>
<div style="position:absolute;left:402px;top:401.5px;width:1085px;height:22.5px;background:#dff1fc"></div>
<div style="position:absolute;left:402px;top:424.0px;width:1085px;height:22.5px;background:#ffffff"></div>
<div style="position:absolute;left:402px;top:446.5px;width:1085px;height:22.5px;background:#dff1fc"></div>
<div style="position:absolute;left:477px;top:290px;width:1px;height:411px;background:#c9c9c9"></div>
<div style="position:absolute;left:816px;top:290px;width:1px;height:411px;background:#c9c9c9"></div>
<div style="position:absolute;left:930px;top:290px;width:1px;height:411px;background:#c9c9c9"></div>
<div style="position:absolute;left:1031px;top:290px;width:1px;height:411px;background:#c9c9c9"></div>
<div style="position:absolute;left:1158px;top:290px;width:1px;height:411px;background:#c9c9c9"></div>
<div style="position:absolute;left:1271px;top:290px;width:1px;height:411px;background:#c9c9c9"></div>
<div style="position:absolute;left:1385px;top:290px;width:1px;height:411px;background:#c9c9c9"></div>
<div style="position:absolute;left:1486px;top:290px;width:1px;height:411px;background:#c9c9c9"></div>
<div style="position:absolute;left:402px;top:333.5px;width:1085px;height:1px;background:#c9c9c9"></div>
<div style="position:absolute;left:402px;top:356.0px;width:1085px;height:1px;background:#c9c9c9"></div>
<div style="position:absolute;left:402px;top:378.5px;width:1085px;height:1px;background:#c9c9c9"></div>
<div style="position:absolute;left:402px;top:401.0px;width:1085px;height:1px;background:#c9c9c9"></div>
<div style="position:absolute;left:402px;top:423.5px;width:1085px;height:1px;background:#c9c9c9"></div>
<div style="position:absolute;left:402px;top:446.0px;width:1085px;height:1px;background:#c9c9c9"></div>
<div style="position:absolute;left:402px;top:468.5px;width:1088px;height:1px;background:#c9c9c9"></div>
<div style="position:absolute;left:402px;top:491.0px;width:1088px;height:1px;background:#c9c9c9"></div>
<div style="position:absolute;left:402px;top:513.5px;width:1088px;height:1px;background:#c9c9c9"></div>
<div style="position:absolute;left:402px;top:536.0px;width:1088px;height:1px;background:#c9c9c9"></div>
<div style="position:absolute;left:402px;top:558.5px;width:1088px;height:1px;background:#c9c9c9"></div>
<div style="position:absolute;left:402px;top:581.0px;width:1088px;height:1px;background:#c9c9c9"></div>
<div style="position:absolute;left:402px;top:603.5px;width:1088px;height:1px;background:#c9c9c9"></div>
<div style="position:absolute;left:402px;top:626.0px;width:1088px;height:1px;background:#c9c9c9"></div>
<div style="position:absolute;left:402px;top:648.5px;width:1088px;height:1px;background:#c9c9c9"></div>
<div style="position:absolute;left:402px;top:671.0px;width:1088px;height:1px;background:#c9c9c9"></div>
<div style="position:absolute;left:402px;top:693.5px;width:1088px;height:1px;background:#c9c9c9"></div>
<div style="position:absolute;left:390px;top:290px;width:11px;height:411px;background:#f2f2f2;border-left:1px solid #fcfcfc"></div>
<div style="position:absolute;left:400.5px;top:290px;width:1.5px;height:411px;background:#1e1e1e"></div>
<div style="position:absolute;left:390px;top:310.75px;width:11px;height:1.5px;background:#1e1e1e"></div>
<div style="position:absolute;left:390px;top:333.25px;width:11px;height:1.5px;background:#1e1e1e"></div>
<div style="position:absolute;left:390px;top:355.75px;width:11px;height:1.5px;background:#1e1e1e"></div>
<div style="position:absolute;left:390px;top:378.25px;width:11px;height:1.5px;background:#1e1e1e"></div>
<div style="position:absolute;left:390px;top:400.75px;width:11px;height:1.5px;background:#1e1e1e"></div>
<div style="position:absolute;left:390px;top:423.25px;width:11px;height:1.5px;background:#1e1e1e"></div>
<div style="position:absolute;left:390px;top:445.75px;width:11px;height:1.5px;background:#1e1e1e"></div>
<div style="position:absolute;left:390px;top:468.25px;width:11px;height:1.5px;background:#1e1e1e"></div>
<div style="position:absolute;left:390px;top:490.75px;width:11px;height:1.5px;background:#1e1e1e"></div>
<div style="position:absolute;left:390px;top:513.25px;width:11px;height:1.5px;background:#1e1e1e"></div>
<div style="position:absolute;left:390px;top:535.75px;width:11px;height:1.5px;background:#1e1e1e"></div>
<div style="position:absolute;left:390px;top:558.25px;width:11px;height:1.5px;background:#1e1e1e"></div>
<div style="position:absolute;left:390px;top:580.75px;width:11px;height:1.5px;background:#1e1e1e"></div>
<div style="position:absolute;left:390px;top:603.25px;width:11px;height:1.5px;background:#1e1e1e"></div>
<div style="position:absolute;left:390px;top:625.75px;width:11px;height:1.5px;background:#1e1e1e"></div>
<div style="position:absolute;left:390px;top:648.25px;width:11px;height:1.5px;background:#1e1e1e"></div>
<div style="position:absolute;left:390px;top:670.75px;width:11px;height:1.5px;background:#1e1e1e"></div>
<div style="position:absolute;left:390px;top:693.25px;width:11px;height:1.5px;background:#1e1e1e"></div>
<div style="position:absolute;left:402px;top:311.5px;width:1087px;height:22.5px;background:#000;border-left:1px solid #1e6fc8;border-bottom:1px solid #1e78d8"></div>
<div style="position:absolute;left:477px;top:311.5px;width:1px;height:22px;background:#8a8a8a"></div>
<div style="position:absolute;left:816px;top:311.5px;width:1px;height:22px;background:#8a8a8a"></div>
<div style="position:absolute;left:930px;top:311.5px;width:1px;height:22px;background:#8a8a8a"></div>
<div style="position:absolute;left:1031px;top:311.5px;width:1px;height:22px;background:#8a8a8a"></div>
<div style="position:absolute;left:1158px;top:311.5px;width:1px;height:22px;background:#8a8a8a"></div>
<div style="position:absolute;left:1271px;top:311.5px;width:1px;height:22px;background:#8a8a8a"></div>
<div style="position:absolute;left:1385px;top:311.5px;width:1px;height:22px;background:#8a8a8a"></div>
<div style="position:absolute;left:1486px;top:311.5px;width:1px;height:22px;background:#8a8a8a"></div>
<svg style="position:absolute;left:394px;top:320px" width="7" height="10" viewBox="0 0 7 10"><path d="M0.5 0.5 L6.5 5 L0.5 9.5 Z" fill="#000"/></svg>
<div style="position:absolute;left:404.50px;top:308.40px;width:1000px;height:30px;line-height:30px;font-size:15px;color:#fff;text-align:left;font-weight:normal;white-space:nowrap;">TSWB</div>
<div style="position:absolute;left:480.60px;top:308.40px;width:1000px;height:30px;line-height:30px;font-size:15px;color:#fff;text-align:left;font-weight:normal;white-space:nowrap;">ZBASKETBALL ARENA LTDA.</div>
<div style="position:absolute;left:820.40px;top:308.40px;width:1000px;height:30px;line-height:30px;font-size:15px;color:#fff;text-align:left;font-weight:normal;white-space:nowrap;">basketball</div>
<div style="position:absolute;left:28.00px;top:308.40px;width:1000px;height:30px;line-height:30px;font-size:15px;color:#fff;text-align:right;font-weight:normal;white-space:nowrap;">0</div>
<div style="position:absolute;left:1035.00px;top:308.33px;width:1000px;height:30px;line-height:30px;font-size:15.2px;color:#fff;text-align:left;font-weight:normal;white-space:nowrap;">Acesso direto</div>
<div style="position:absolute;left:1161.50px;top:308.33px;width:1000px;height:30px;line-height:30px;font-size:15.2px;color:#fff;text-align:left;font-weight:normal;white-space:nowrap;">18/08/2023</div>
<div style="position:absolute;left:1274.80px;top:308.33px;width:1000px;height:30px;line-height:30px;font-size:15.2px;color:#fff;text-align:left;font-weight:normal;white-space:nowrap;">01/01/2079</div>
<div style="position:absolute;left:484.00px;top:308.33px;width:1000px;height:30px;line-height:30px;font-size:15.2px;color:#fff;text-align:right;font-weight:normal;white-space:nowrap;">2</div>
<div style="position:absolute;left:404.50px;top:330.90px;width:1000px;height:30px;line-height:30px;font-size:15px;color:#111;text-align:left;font-weight:normal;white-space:nowrap;">TSWB</div>
<div style="position:absolute;left:480.60px;top:330.90px;width:1000px;height:30px;line-height:30px;font-size:15px;color:#111;text-align:left;font-weight:normal;white-space:nowrap;">ARANHA</div>
<div style="position:absolute;left:820.40px;top:330.90px;width:1000px;height:30px;line-height:30px;font-size:15px;color:#111;text-align:left;font-weight:normal;white-space:nowrap;">aranha</div>
<div style="position:absolute;left:28.00px;top:330.90px;width:1000px;height:30px;line-height:30px;font-size:15px;color:#111;text-align:right;font-weight:normal;white-space:nowrap;">2</div>
<div style="position:absolute;left:1035.00px;top:330.83px;width:1000px;height:30px;line-height:30px;font-size:15.2px;color:#111;text-align:left;font-weight:normal;white-space:nowrap;">Senha</div>
<div style="position:absolute;left:1161.50px;top:330.83px;width:1000px;height:30px;line-height:30px;font-size:15.2px;color:#111;text-align:left;font-weight:normal;white-space:nowrap;">01/08/2023</div>
<div style="position:absolute;left:1274.80px;top:330.83px;width:1000px;height:30px;line-height:30px;font-size:15.2px;color:#111;text-align:left;font-weight:normal;white-space:nowrap;">31/12/2023</div>
<div style="position:absolute;left:484.00px;top:330.83px;width:1000px;height:30px;line-height:30px;font-size:15.2px;color:#111;text-align:right;font-weight:normal;white-space:nowrap;">3</div>
<div style="position:absolute;left:404.50px;top:353.40px;width:1000px;height:30px;line-height:30px;font-size:15px;color:#111;text-align:left;font-weight:normal;white-space:nowrap;">TSWB</div>
<div style="position:absolute;left:480.60px;top:353.40px;width:1000px;height:30px;line-height:30px;font-size:15px;color:#111;text-align:left;font-weight:normal;white-space:nowrap;">NETFLIX</div>
<div style="position:absolute;left:820.40px;top:353.40px;width:1000px;height:30px;line-height:30px;font-size:15px;color:#111;text-align:left;font-weight:normal;white-space:nowrap;">netflix</div>
<div style="position:absolute;left:28.00px;top:353.40px;width:1000px;height:30px;line-height:30px;font-size:15px;color:#111;text-align:right;font-weight:normal;white-space:nowrap;">0</div>
<div style="position:absolute;left:1035.00px;top:353.33px;width:1000px;height:30px;line-height:30px;font-size:15.2px;color:#111;text-align:left;font-weight:normal;white-space:nowrap;">Acesso direto</div>
<div style="position:absolute;left:1161.50px;top:353.33px;width:1000px;height:30px;line-height:30px;font-size:15.2px;color:#111;text-align:left;font-weight:normal;white-space:nowrap;">01/10/2023</div>
<div style="position:absolute;left:1274.80px;top:353.33px;width:1000px;height:30px;line-height:30px;font-size:15.2px;color:#111;text-align:left;font-weight:normal;white-space:nowrap;">01/06/2025</div>
<div style="position:absolute;left:484.00px;top:353.33px;width:1000px;height:30px;line-height:30px;font-size:15.2px;color:#111;text-align:right;font-weight:normal;white-space:nowrap;">5</div>
<div style="position:absolute;left:404.50px;top:375.90px;width:1000px;height:30px;line-height:30px;font-size:15px;color:#111;text-align:left;font-weight:normal;white-space:nowrap;">TSWB</div>
<div style="position:absolute;left:480.60px;top:375.90px;width:1000px;height:30px;line-height:30px;font-size:15px;color:#111;text-align:left;font-weight:normal;white-space:nowrap;">HOT SITE</div>
<div style="position:absolute;left:820.40px;top:375.90px;width:1000px;height:30px;line-height:30px;font-size:15px;color:#111;text-align:left;font-weight:normal;white-space:nowrap;">hotsite</div>
<div style="position:absolute;left:28.00px;top:375.90px;width:1000px;height:30px;line-height:30px;font-size:15px;color:#111;text-align:right;font-weight:normal;white-space:nowrap;">0</div>
<div style="position:absolute;left:1035.00px;top:375.83px;width:1000px;height:30px;line-height:30px;font-size:15.2px;color:#111;text-align:left;font-weight:normal;white-space:nowrap;">Acesso direto</div>
<div style="position:absolute;left:1161.50px;top:375.83px;width:1000px;height:30px;line-height:30px;font-size:15.2px;color:#111;text-align:left;font-weight:normal;white-space:nowrap;">01/01/2024</div>
<div style="position:absolute;left:1274.80px;top:375.83px;width:1000px;height:30px;line-height:30px;font-size:15.2px;color:#111;text-align:left;font-weight:normal;white-space:nowrap;">01/01/2026</div>
<div style="position:absolute;left:484.00px;top:375.83px;width:1000px;height:30px;line-height:30px;font-size:15.2px;color:#111;text-align:right;font-weight:normal;white-space:nowrap;">6</div>
<div style="position:absolute;left:404.50px;top:398.40px;width:1000px;height:30px;line-height:30px;font-size:15px;color:#111;text-align:left;font-weight:normal;white-space:nowrap;">TSWB</div>
<div style="position:absolute;left:480.60px;top:398.40px;width:1000px;height:30px;line-height:30px;font-size:15px;color:#111;text-align:left;font-weight:normal;white-space:nowrap;">HOT SITE TS</div>
<div style="position:absolute;left:820.40px;top:398.40px;width:1000px;height:30px;line-height:30px;font-size:15px;color:#111;text-align:left;font-weight:normal;white-space:nowrap;">hotsitets</div>
<div style="position:absolute;left:28.00px;top:398.40px;width:1000px;height:30px;line-height:30px;font-size:15px;color:#111;text-align:right;font-weight:normal;white-space:nowrap;">0</div>
<div style="position:absolute;left:1035.00px;top:398.33px;width:1000px;height:30px;line-height:30px;font-size:15.2px;color:#111;text-align:left;font-weight:normal;white-space:nowrap;">Acesso direto</div>
<div style="position:absolute;left:1161.50px;top:398.33px;width:1000px;height:30px;line-height:30px;font-size:15.2px;color:#111;text-align:left;font-weight:normal;white-space:nowrap;">26/06/2024</div>
<div style="position:absolute;left:1274.80px;top:398.33px;width:1000px;height:30px;line-height:30px;font-size:15.2px;color:#111;text-align:left;font-weight:normal;white-space:nowrap;">31/12/2025</div>
<div style="position:absolute;left:484.00px;top:398.33px;width:1000px;height:30px;line-height:30px;font-size:15.2px;color:#111;text-align:right;font-weight:normal;white-space:nowrap;">18</div>
<div style="position:absolute;left:404.50px;top:420.90px;width:1000px;height:30px;line-height:30px;font-size:15px;color:#111;text-align:left;font-weight:normal;white-space:nowrap;">TSWB</div>
<div style="position:absolute;left:480.60px;top:420.90px;width:1000px;height:30px;line-height:30px;font-size:15px;color:#111;text-align:left;font-weight:normal;white-space:nowrap;">HOT SITE PARK</div>
<div style="position:absolute;left:820.40px;top:420.90px;width:1000px;height:30px;line-height:30px;font-size:15px;color:#111;text-align:left;font-weight:normal;white-space:nowrap;">park</div>
<div style="position:absolute;left:28.00px;top:420.90px;width:1000px;height:30px;line-height:30px;font-size:15px;color:#111;text-align:right;font-weight:normal;white-space:nowrap;">0</div>
<div style="position:absolute;left:1035.00px;top:420.83px;width:1000px;height:30px;line-height:30px;font-size:15.2px;color:#111;text-align:left;font-weight:normal;white-space:nowrap;">Acesso direto</div>
<div style="position:absolute;left:1161.50px;top:420.83px;width:1000px;height:30px;line-height:30px;font-size:15.2px;color:#111;text-align:left;font-weight:normal;white-space:nowrap;">13/08/2024</div>
<div style="position:absolute;left:1274.80px;top:420.83px;width:1000px;height:30px;line-height:30px;font-size:15.2px;color:#111;text-align:left;font-weight:normal;white-space:nowrap;">13/10/2025</div>
<div style="position:absolute;left:484.00px;top:420.83px;width:1000px;height:30px;line-height:30px;font-size:15.2px;color:#111;text-align:right;font-weight:normal;white-space:nowrap;">19</div>
<div style="position:absolute;left:404.50px;top:443.40px;width:1000px;height:30px;line-height:30px;font-size:15px;color:#111;text-align:left;font-weight:normal;white-space:nowrap;">TSWB</div>
<div style="position:absolute;left:480.60px;top:443.40px;width:1000px;height:30px;line-height:30px;font-size:15px;color:#111;text-align:left;font-weight:normal;white-space:nowrap;">HOT SITE PWI</div>
<div style="position:absolute;left:820.40px;top:443.40px;width:1000px;height:30px;line-height:30px;font-size:15px;color:#111;text-align:left;font-weight:normal;white-space:nowrap;">hotsiteowi</div>
<div style="position:absolute;left:28.00px;top:443.40px;width:1000px;height:30px;line-height:30px;font-size:15px;color:#111;text-align:right;font-weight:normal;white-space:nowrap;">0</div>
<div style="position:absolute;left:1035.00px;top:443.33px;width:1000px;height:30px;line-height:30px;font-size:15.2px;color:#111;text-align:left;font-weight:normal;white-space:nowrap;">Acesso direto</div>
<div style="position:absolute;left:1161.50px;top:443.33px;width:1000px;height:30px;line-height:30px;font-size:15.2px;color:#111;text-align:left;font-weight:normal;white-space:nowrap;">13/08/2024</div>
<div style="position:absolute;left:1274.80px;top:443.33px;width:1000px;height:30px;line-height:30px;font-size:15.2px;color:#111;text-align:left;font-weight:normal;white-space:nowrap;">01/01/2025</div>
<div style="position:absolute;left:484.00px;top:443.33px;width:1000px;height:30px;line-height:30px;font-size:15.2px;color:#111;text-align:right;font-weight:normal;white-space:nowrap;">21</div>
<div style="position:absolute;left:389px;top:701px;width:1124px;height:1px;background:#fafafa"></div>
<div style="position:absolute;left:391px;top:701px;width:5px;height:20px;background:#000"></div>
<div style="position:absolute;left:388px;top:722px;width:1125px;height:1px;background:#ffffff"></div>
<div style="position:absolute;left:388px;top:723px;width:1125px;height:1px;background:#c3c3c3"></div>
<div style="position:absolute;left:1511px;top:289px;width:1px;height:434px;background:#ffffff"></div>
<div style="position:absolute;left:1512px;top:289px;width:1px;height:435px;background:#c3c3c3"></div>
<div style="position:absolute;left:716px;top:480px;width:222px;height:235px;background:#f0f0f0;border:1px solid #c8c8c8;border-right:1px solid #777;border-bottom:1px solid #777;box-shadow:2px 2px 2px rgba(0,0,0,.45)"></div>
<div style="position:absolute;left:720px;top:507px;width:213px;height:24px;background:#0078d7"></div>
<div style="position:absolute;left:745.00px;top:480.74px;width:1000px;height:30px;line-height:30px;font-size:14.6px;color:#111;text-align:left;font-weight:bold;white-space:nowrap;"><u>A</u>lterar</div>
<div style="position:absolute;left:745.00px;top:504.94px;width:1000px;height:30px;line-height:30px;font-size:14.6px;color:#fff;text-align:left;font-weight:normal;white-space:nowrap;"><u>I</u>ncluir</div>
<div style="position:absolute;left:745.00px;top:528.84px;width:1000px;height:30px;line-height:30px;font-size:14.6px;color:#111;text-align:left;font-weight:normal;white-space:nowrap;">Incluir <u>C</u>opiando</div>
<div style="position:absolute;left:745.00px;top:560.64px;width:1000px;height:30px;line-height:30px;font-size:14.6px;color:#111;text-align:left;font-weight:normal;white-space:nowrap;"><u>V</u>incular produtos</div>
<div style="position:absolute;left:745.00px;top:593.14px;width:1000px;height:30px;line-height:30px;font-size:14.6px;color:#111;text-align:left;font-weight:normal;white-space:nowrap;"><u>E</u>xcluir</div>
<div style="position:absolute;left:745.00px;top:617.14px;width:1000px;height:30px;line-height:30px;font-size:14.6px;color:#111;text-align:left;font-weight:normal;white-space:nowrap;"><u>D</u>esativar/Ativar</div>
<div style="position:absolute;left:745.00px;top:649.24px;width:1000px;height:30px;line-height:30px;font-size:14.6px;color:#111;text-align:left;font-weight:normal;white-space:nowrap;">Relativo ao</div>
<div style="position:absolute;left:745.00px;top:672.94px;width:1000px;height:30px;line-height:30px;font-size:14.6px;color:#111;text-align:left;font-weight:normal;white-space:nowrap;">Propriedades (CTRL+T)</div>
<div style="position:absolute;left:741px;top:559px;width:170px;height:1px;background:#bdbdbd"></div>
<div style="position:absolute;left:741px;top:560px;width:170px;height:1px;background:#fff"></div>
<div style="position:absolute;left:741px;top:591px;width:170px;height:1px;background:#bdbdbd"></div>
<div style="position:absolute;left:741px;top:592px;width:170px;height:1px;background:#fff"></div>
<div style="position:absolute;left:741px;top:647.5px;width:170px;height:1px;background:#bdbdbd"></div>
<div style="position:absolute;left:741px;top:648.5px;width:170px;height:1px;background:#fff"></div>
<svg style="position:absolute;left:918px;top:659px" width="7" height="11" viewBox="0 0 7 11"><path d="M0.5 0.5 L6 5.5 L0.5 10.5 Z" fill="#000"/></svg>
<div style="position:absolute;left:723.5px;top:504.5px;width:205px;height:30px;border:6px solid #e31b1b"></div>
<div style="position:absolute;left:1168px;top:64px;width:114px;height:52px;border:6px solid #e31b1b"></div>
</body></html>
